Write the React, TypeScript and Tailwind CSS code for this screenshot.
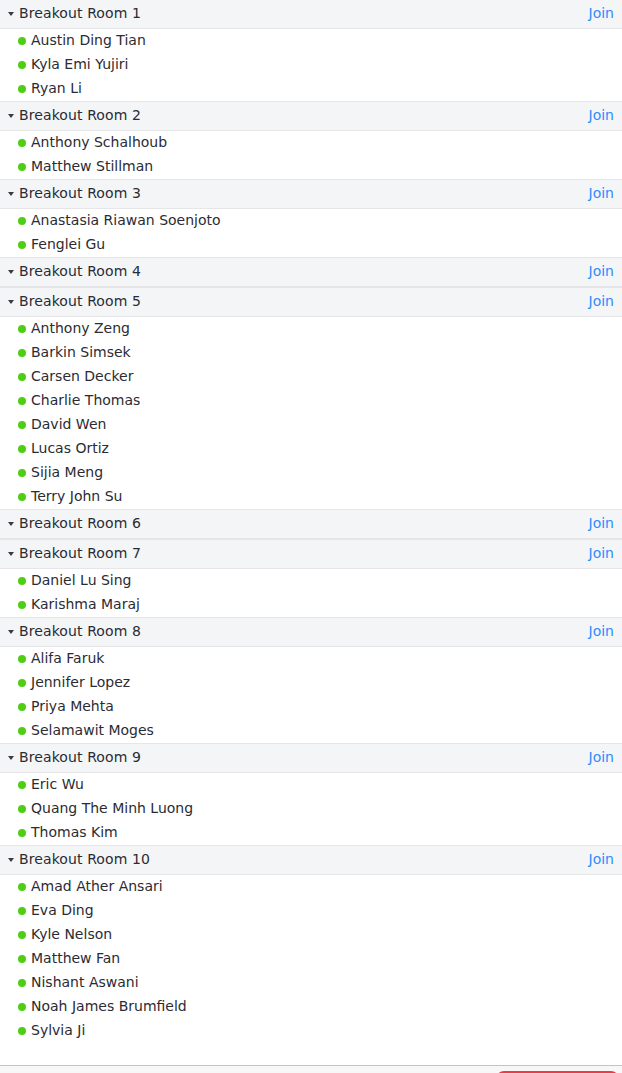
import React from "react";

const rooms: { name: string; members: string[] }[] = [
  { name: "Breakout Room 1", members: ["Austin Ding Tian", "Kyla Emi Yujiri", "Ryan Li"] },
  { name: "Breakout Room 2", members: ["Anthony Schalhoub", "Matthew Stillman"] },
  { name: "Breakout Room 3", members: ["Anastasia Riawan Soenjoto", "Fenglei Gu"] },
  { name: "Breakout Room 4", members: [] },
  {
    name: "Breakout Room 5",
    members: [
      "Anthony Zeng",
      "Barkin Simsek",
      "Carsen Decker",
      "Charlie Thomas",
      "David Wen",
      "Lucas Ortiz",
      "Sijia Meng",
      "Terry John Su",
    ],
  },
  { name: "Breakout Room 6", members: [] },
  { name: "Breakout Room 7", members: ["Daniel Lu Sing", "Karishma Maraj"] },
  {
    name: "Breakout Room 8",
    members: ["Alifa Faruk", "Jennifer Lopez", "Priya Mehta", "Selamawit Moges"],
  },
  { name: "Breakout Room 9", members: ["Eric Wu", "Quang The Minh Luong", "Thomas Kim"] },
  {
    name: "Breakout Room 10",
    members: [
      "Amad Ather Ansari",
      "Eva Ding",
      "Kyle Nelson",
      "Matthew Fan",
      "Nishant Aswani",
      "Noah James Brumfield",
      "Sylvia Ji",
    ],
  },
];

export default function App() {
  return (
    <div
      className="w-[622px] h-[1073px] overflow-hidden bg-white flex flex-col text-[14px] text-[#2b2b33]"
      style={{ fontFamily: '"DejaVu Sans", "Noto Sans", sans-serif' }}
    >
      <div className="flex flex-col shrink-0">
        {rooms.map((room, i) => (
          <div
            key={room.name}
            className={i === rooms.length - 1 ? "" : "border-b border-[#e6e6e8]"}
          >
            <div className="h-[29px] bg-[#f4f5f7] border-b border-[#e6e6e8] flex items-center pl-[8px] pr-[8px] pb-[2px]">
              <svg width="6" height="4" viewBox="0 0 6 4" className="mr-[5px] mt-[1px]">
                <path d="M0 0 L6 0 L3 4 Z" fill="#3a3a44" />
              </svg>
              <span className="flex-1 leading-none tracking-[0.1px]">{room.name}</span>
              <span className="text-[#2d8cff] leading-none">Join</span>
            </div>
            {room.members.map((m) => (
              <div key={m} className="h-6 flex items-center pl-[18px] pb-[2px]">
                <span className="w-[8px] h-[8px] rounded-full bg-[#4fcf14] mr-[5px] mt-[1px] shrink-0" />
                <span className="leading-none">{m}</span>
              </div>
            ))}
          </div>
        ))}
      </div>
      <div className="h-[22px] shrink-0" />
      <div className="flex-1 border-t border-[#c4c4c4] bg-[#f7f7f7] flex justify-end pr-[3px] pt-[5px]">
        <div className="w-[123px] h-[40px] shrink-0 rounded-[8px] bg-[#eb3b46]" />
      </div>
    </div>
  );
}
